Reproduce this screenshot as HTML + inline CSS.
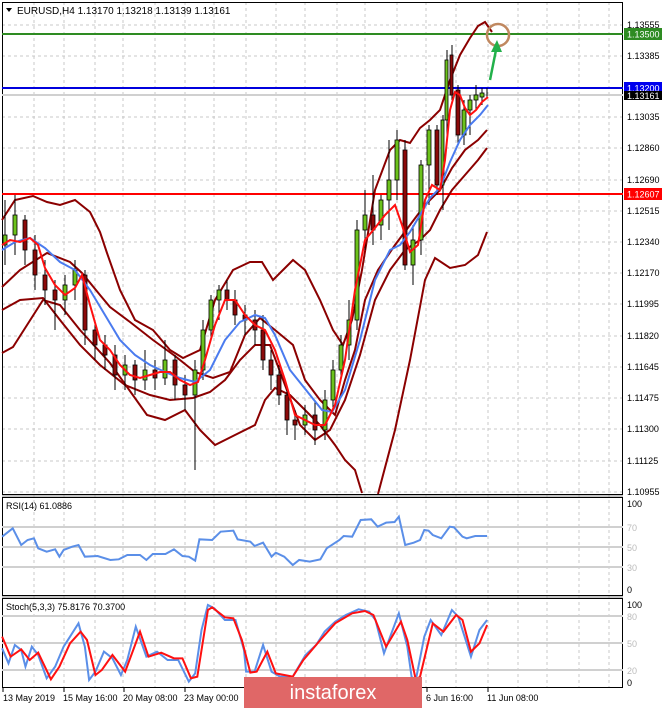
<!DOCTYPE html>
<html><head><meta charset="utf-8"><style>
html,body{margin:0;padding:0;background:#fff;width:665px;height:708px;overflow:hidden}
svg{display:block;font-family:"Liberation Sans",sans-serif}
</style></head><body>
<svg width="665" height="708" viewBox="0 0 665 708">
<rect width="665" height="708" fill="#fff"/>
<g stroke="#c8c8c8" stroke-width="1" stroke-dasharray="3,3">
<path d="M34 2V688M64 2V688M95 2V688M123 2V688M155 2V688M185 2V688M214 2V688M246 2V688M276 2V688M305 2V688M337 2V688M365 2V688M397 2V688M426 2V688M456 2V688M488 2V688M518 2V688M547 2V688M579 2V688M609 2V688"/>
<path d="M2 25H623M2 56H623M2 117H623M2 148H623M2 180H623M2 211H623M2 242H623M2 273H623M2 304H623M2 336H623M2 367H623M2 398H623M2 429H623M2 461H623M2 492H623"/>
</g>
<rect x="2.5" y="2.5" width="620" height="492" fill="none" stroke="#000"/>
<rect x="2.5" y="497.5" width="620" height="98" fill="none" stroke="#000"/>
<rect x="2.5" y="598.5" width="620" height="89" fill="none" stroke="#000"/>
<line x1="2" y1="496" x2="623" y2="496" stroke="#888"/>
<line x1="2" y1="597" x2="623" y2="597" stroke="#888"/>
<line x1="2" y1="95" x2="623" y2="95" stroke="#d0d0d0" stroke-width="2"/>
<line x1="2" y1="34" x2="623" y2="34" stroke="#2e8b22" stroke-width="2"/>
<line x1="2" y1="88" x2="623" y2="88" stroke="#0000dd" stroke-width="2"/>
<line x1="2" y1="194" x2="623" y2="194" stroke="#ff0000" stroke-width="2"/>
<g fill="none" stroke="#8b0000" stroke-width="2">
<polyline points="2,220 15,200 33,196 47,202 60,205 75,200 90,212 100,232 107,253 120,290 135,320 153,330 170,350 183,358 200,350 215,300 233,270 250,262 262,262 273,280 285,268 293,260 305,270 320,300 333,330 343,345 352,320 362,270 375,190 390,150 400,140 410,143 420,128 430,120 440,110 450,80 460,55 470,38 478,26 485,22 492,32"/>
<polyline points="2,287 20,270 47,253 70,262 82,273 100,295 110,307 130,322 153,340 175,356 195,372 213,378 230,372 245,335 260,318 275,330 293,345 305,380 320,400 335,415 345,380 355,350 365,300 378,270 395,245 410,225 425,205 440,190 452,168 465,150 478,140 487,130"/>
<polyline points="2,353 13,347 43,300 60,305 80,330 110,363 147,415 165,420 185,410 200,430 215,445 235,435 255,425 265,400 275,388 290,395 305,410 320,425 335,445 345,460 355,470 362,493"/>
<polyline points="2,310 20,300 43,298 60,320 80,345 100,365 125,385 150,395 170,400 193,398 210,392 225,380 240,360 255,345 270,345 285,385 300,425 315,440 330,430 345,400 360,355 375,300 390,270 405,250 420,240 430,230 440,210 452,190 465,175 478,160 487,148"/>
<polyline points="378,494 395,430 410,360 425,280 435,258 450,268 465,265 478,255 487,232"/>
</g>
<g stroke="#000" stroke-width="1">
<path d="M5 200V265M15 195V255M25 215V265M35 235V290M45 260V305M55 280V330M65 275V315M75 260V300M85 270V345M95 320V360M105 335V370M115 345V390M125 355V390M135 360V395M145 350V390M155 360V390M165 340V385M175 355V400M185 375V410M195 360V470M203 320V380M211 295V340M219 285V320M227 280V310M235 290V325M245 305V335M255 310V345M263 315V370M271 350V390M279 365V405M287 385V435M295 410V440M305 405V435M315 400V445M325 390V440M333 360V410M341 335V380M349 300V360M357 220V330M365 190V250M373 175V245M381 195V240M389 140V230M397 130V200M405 140V270M413 225V285M421 160V255M429 125V205M437 125V195M443 115V210M447 50V140M452 45V100M458 85V145M464 100V145M470 95V135M476 85V110M482 88V105M487 88V98"/>
</g>
<g stroke="#000" stroke-width="0.8">
<g fill="#6cc21c">
<rect x="3" y="235" width="4" height="10"/><rect x="13" y="215" width="4" height="20"/><rect x="63" y="285" width="4" height="15"/><rect x="73" y="270" width="4" height="15"/><rect x="123" y="365" width="4" height="10"/><rect x="143" y="370" width="4" height="10"/><rect x="163" y="360" width="4" height="18"/><rect x="193" y="370" width="4" height="25"/><rect x="201" y="330" width="4" height="40"/><rect x="209" y="300" width="4" height="30"/><rect x="217" y="290" width="4" height="10"/><rect x="303" y="415" width="4" height="10"/><rect x="323" y="400" width="4" height="30"/><rect x="331" y="370" width="4" height="30"/><rect x="339" y="345" width="4" height="25"/><rect x="347" y="320" width="4" height="25"/><rect x="355" y="230" width="4" height="90"/><rect x="363" y="215" width="4" height="15"/><rect x="379" y="200" width="4" height="25"/><rect x="387" y="180" width="4" height="20"/><rect x="395" y="140" width="4" height="40"/><rect x="411" y="240" width="4" height="25"/><rect x="419" y="165" width="4" height="75"/><rect x="427" y="130" width="4" height="35"/><rect x="441" y="120" width="3" height="65"/><rect x="445" y="60" width="3" height="60"/><rect x="462" y="110" width="4" height="25"/><rect x="468" y="100" width="4" height="10"/><rect x="474" y="95" width="4" height="5"/><rect x="480" y="93" width="4" height="4"/>
</g>
<g fill="#8b0a0a">
<rect x="23" y="220" width="4" height="30"/><rect x="33" y="250" width="4" height="25"/><rect x="43" y="275" width="4" height="15"/><rect x="53" y="290" width="4" height="10"/><rect x="83" y="275" width="4" height="55"/><rect x="93" y="330" width="4" height="15"/><rect x="103" y="345" width="4" height="10"/><rect x="113" y="355" width="4" height="20"/><rect x="133" y="365" width="4" height="15"/><rect x="153" y="370" width="4" height="8"/><rect x="173" y="360" width="4" height="25"/><rect x="183" y="385" width="4" height="10"/><rect x="225" y="290" width="4" height="10"/><rect x="233" y="300" width="4" height="15"/><rect x="243" y="315" width="4" height="5"/><rect x="253" y="320" width="4" height="10"/><rect x="261" y="330" width="4" height="30"/><rect x="269" y="360" width="4" height="15"/><rect x="277" y="375" width="4" height="20"/><rect x="285" y="395" width="4" height="25"/><rect x="293" y="420" width="4" height="5"/><rect x="313" y="415" width="4" height="15"/><rect x="371" y="215" width="4" height="15"/><rect x="403" y="150" width="4" height="115"/><rect x="435" y="130" width="4" height="55"/><rect x="450" y="55" width="3" height="40"/><rect x="456" y="90" width="4" height="45"/>
</g>
</g>
<polyline fill="none" stroke="#4a7bef" stroke-width="2" points="2,250 15,242 30,238 45,248 60,262 75,270 90,290 105,315 120,340 135,355 150,365 165,372 180,378 195,382 210,370 225,340 240,322 255,315 265,318 275,335 290,370 310,395 322,410 332,412 345,390 360,340 375,280 390,250 400,245 410,232 420,215 430,198 440,188 450,162 460,140 470,125 480,115 488,105"/>
<polyline fill="none" stroke="#ff1010" stroke-width="2" points="2,245 10,240 20,242 30,238 38,245 45,268 55,285 65,295 75,288 82,275 90,305 100,340 110,350 120,365 130,375 140,378 150,375 160,372 170,372 180,380 190,385 198,382 205,360 215,325 225,300 235,300 245,315 255,325 265,330 275,350 285,380 295,415 305,420 315,425 325,425 335,405 345,360 355,290 365,240 375,228 385,215 395,205 402,225 410,252 418,245 425,200 432,185 440,190 445,160 450,110 455,92 460,95 465,108 470,115 476,110 482,102 488,97"/>
<circle cx="498" cy="35" r="11" fill="none" stroke="#c08860" stroke-width="2.5"/>
<line x1="490" y1="80" x2="497" y2="45" stroke="#22b04a" stroke-width="2.5"/>
<path d="M497 40 L491 52 L502 52 Z" fill="#22b04a"/>
<path d="M6 8 L12 8 L9 12 Z" fill="#000"/>
<text x="17" y="14" font-size="10" fill="#000">EURUSD,H4  1.13170 1.13218 1.13139 1.13161</text>
<g font-size="9" fill="#000">
<text x="627" y="28">1.13555</text>
<text x="627" y="59">1.13385</text>
<text x="627" y="120">1.13035</text>
<text x="627" y="151">1.12860</text>
<text x="627" y="183">1.12690</text>
<text x="627" y="214">1.12515</text>
<text x="627" y="245">1.12340</text>
<text x="627" y="276">1.12170</text>
<text x="627" y="307">1.11995</text>
<text x="627" y="339">1.11820</text>
<text x="627" y="370">1.11645</text>
<text x="627" y="401">1.11475</text>
<text x="627" y="432">1.11300</text>
<text x="627" y="464">1.11125</text>
<text x="627" y="495">1.10955</text>
</g>
<rect x="624" y="28" width="38" height="12" fill="#2e8b22"/><text x="627" y="37.5" font-size="9" fill="#fff">1.13500</text>
<rect x="624" y="82" width="38" height="12" fill="#0000ee"/><text x="627" y="91.5" font-size="9" fill="#fff">1.13200</text>
<rect x="624" y="91" width="38" height="9" fill="#000"/><text x="627" y="99" font-size="9" fill="#fff">1.13161</text>
<rect x="624" y="188" width="38" height="12" fill="#ff0000"/><text x="627" y="197.5" font-size="9" fill="#fff">1.12607</text>
<g stroke="#d0d0d0" stroke-width="2"><line x1="2" y1="527" x2="623" y2="527"/><line x1="2" y1="547" x2="623" y2="547"/><line x1="2" y1="567" x2="623" y2="567"/></g>
<text x="6" y="509" font-size="9">RSI(14) 61.0886</text>
<g font-size="9"><text x="627" y="507">100</text><text x="627" y="531" fill="#bbb">70</text><text x="627" y="551" fill="#bbb">50</text><text x="627" y="571" fill="#bbb">30</text><text x="627" y="593">0</text></g>
<g transform="translate(0,480) scale(0.4243,0.3333)">
<polyline fill="none" stroke="#5b8fe8" stroke-width="2" vector-effect="non-scaling-stroke" points="5,170 30,145 50,195 65,180 80,175 90,205 110,215 130,208 140,230 150,210 170,200 185,195 200,230 230,228 260,240 280,238 300,225 330,225 345,240 360,222 390,222 410,208 430,228 445,230 460,242 470,178 500,180 520,155 550,152 560,178 590,185 600,198 620,188 640,230 650,218 670,230 690,255 705,240 730,245 755,238 770,205 800,180 810,168 830,170 850,120 875,118 890,140 910,128 930,126 940,110 955,195 975,188 990,180 1000,150 1010,152 1020,165 1040,175 1060,140 1070,142 1090,170 1100,175 1120,168 1148,168"/>
</g>
<g stroke="#d0d0d0" stroke-width="2"><line x1="2" y1="616" x2="623" y2="616"/><line x1="2" y1="643" x2="623" y2="643"/><line x1="2" y1="670" x2="623" y2="670"/></g>
<text x="6" y="610" font-size="9">Stoch(5,3,3) 75.8176 70.3700</text>
<g font-size="9"><text x="627" y="608">100</text><text x="627" y="620" fill="#bbb">80</text><text x="627" y="647" fill="#bbb">50</text><text x="627" y="674" fill="#bbb">20</text><text x="627" y="686">0</text></g>
<g transform="translate(0,480) scale(0.4243,0.3333)" fill="none">
<polyline stroke="#5b8fe8" stroke-width="2" vector-effect="non-scaling-stroke" points="5,505 20,550 35,495 50,510 60,560 75,500 90,525 110,595 130,560 150,500 165,470 185,430 200,500 210,600 225,575 245,515 265,535 285,585 300,540 320,440 345,530 370,515 395,540 420,540 445,605 460,580 475,450 490,375 505,385 530,420 555,420 575,510 580,575 600,575 620,495 640,575 660,590 690,590 720,525 745,495 765,455 790,425 815,405 845,388 870,395 885,420 905,520 940,400 960,500 970,590 980,600 1000,470 1015,420 1040,465 1065,390 1080,410 1110,530 1130,450 1148,420"/>
<polyline stroke="#ff1010" stroke-width="2" vector-effect="non-scaling-stroke" points="5,470 25,530 50,508 70,540 90,518 120,598 140,560 165,490 190,455 205,480 225,585 240,570 265,525 295,575 330,455 350,530 380,518 410,535 430,535 450,595 465,590 490,390 500,382 530,412 550,415 570,480 590,578 605,575 630,515 650,580 690,590 715,540 755,480 790,430 830,400 860,393 880,405 910,500 945,425 960,480 980,600 990,590 1020,430 1045,455 1075,405 1090,420 1110,515 1130,490 1148,435"/>
</g>
<g font-size="9"><text x="3" y="701">13 May 2019</text><text x="63" y="701">15 May 16:00</text><text x="123" y="701">20 May 08:00</text><text x="184" y="701">23 May 00:00</text><text x="426" y="701">6 Jun 16:00</text><text x="487" y="701">11 Jun 08:00</text></g>
<g stroke="#000"><path d="M3 688V692M64 688V692M124 688V692M185 688V692M427 688V692M488 688V692"/></g>
<rect x="244" y="677" width="178" height="31" fill="#e06767"/>
<text x="333" y="699" font-size="20" fill="#fff" text-anchor="middle">instaforex</text>
</svg>
</body></html>
